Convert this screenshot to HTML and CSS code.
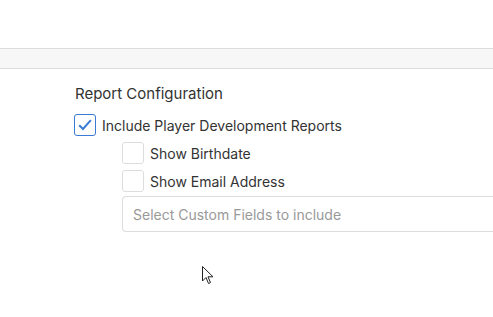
FILE: index.html
```html
<!DOCTYPE html>
<html lang="en">
<head>
    <meta charset="UTF-8">
    <meta name="viewport" content="width=device-width, initial-scale=1.0">
    <title>Report Configuration</title>
    <link rel="stylesheet" href="styles.css">
</head>
<body>
    <div class="topbar"></div>
    <div class="toolbar"></div>

    <div class="config">
        <h3>Report Configuration</h3>

        <label class="option">
            <span class="box checked">
                <svg width="14" height="12" viewBox="0 0 14 12"><path d="M1.2 6.2 L5 10 L12.8 1.2" fill="none" stroke="#3a7bd5" stroke-width="2"/></svg>
            </span>
            Include Player Development Reports
        </label>

        <div class="sub-options">
            <label class="option">
                <span class="box"></span>
                Show Birthdate
            </label>
            <label class="option">
                <span class="box"></span>
                Show Email Address
            </label>
            <div class="select">Select Custom Fields to include</div>
        </div>
    </div>

    <svg class="cursor" width="12" height="20" viewBox="0 0 12 20"><path d="M0.5 0.5 L0.5 15 L4 11.5 L6.5 17.5 L8.5 16.6 L6 10.8 L11 10.8 Z" fill="#fff" stroke="#222" stroke-width="1"/></svg>
</body>
</html>
```

FILE: styles.css
```css
body {
    margin: 0;
    font-family: Inter, "Noto Sans", Arial, sans-serif;
    color: #333;
    background: #fff;
    overflow: hidden;
}
.topbar {
    height: 48px;
}
.toolbar {
    height: 19px;
    background-color: #f7f7f7;
    border-top: 1px solid #dcdcdc;
    border-bottom: 1px solid #dcdcdc;
}
.config {
    padding: 16px 0 0 74px;
}
h3 {
    margin: 0 0 11px 1px;
    font-size: 15px;
    font-weight: 400;
    line-height: 18px;
    color: #333;
}
.option {
    display: flex;
    align-items: center;
    gap: 6px;
    font-size: 14px;
    height: 22px;
    margin-bottom: 6px;
}
.box {
    width: 22px;
    height: 22px;
    border: 1px solid #ddd;
    border-radius: 3px;
    box-sizing: border-box;
    display: flex;
    align-items: center;
    justify-content: center;
    background: #fff;
}
.box.checked {
    border-color: #3a7bd5;
}
.sub-options {
    padding-left: 48px;
}
.select {
    height: 36px;
    border: 1px solid #ddd;
    border-right: none;
    border-radius: 4px 0 0 4px;
    margin-top: -2px;
    box-sizing: border-box;
    display: flex;
    align-items: center;
    padding-left: 10px;
    font-size: 14px;
    color: #999;
}
.cursor {
    position: absolute;
    left: 202px;
    top: 266px;
}
```
